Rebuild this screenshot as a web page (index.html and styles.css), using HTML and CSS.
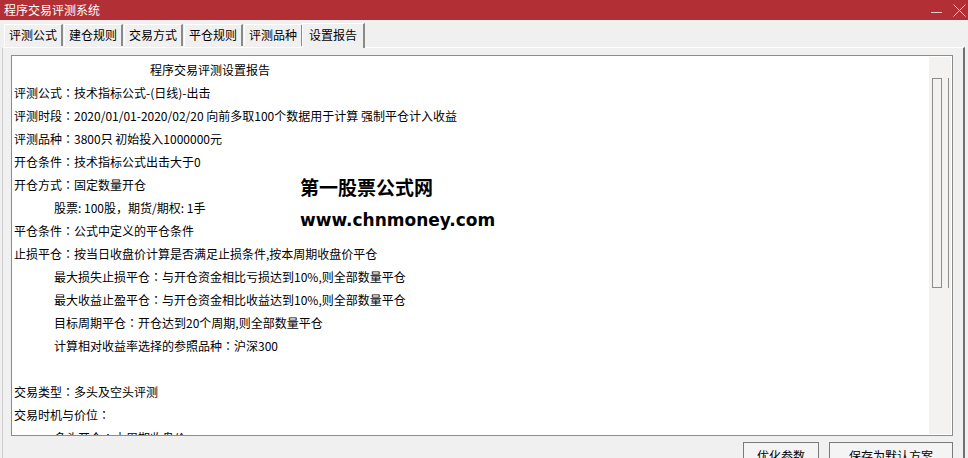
FILE: index.html
```html
<!DOCTYPE html>
<html>
<head>
  <title>程序交易评测系统</title>
  <meta charset="utf-8">
  <link rel="stylesheet" href="styles.css">
</head>
<body>
  <div id="window">
    <div class="titlebar">
      <span class="title">程序交易评测系统</span>
      <div class="win-btns">
        <svg class="btn-min" width="12" height="12" viewBox="0 0 12 12"><line x1="0" y1="6.5" x2="11" y2="6.5" stroke="#e9c9cb" stroke-width="1"/></svg>
        <svg class="btn-close" width="13" height="13" viewBox="0 0 13 13"><path d="M0.5 0.5 L12.5 12.5 M12.5 0.5 L0.5 12.5" stroke="#e9c9cb" stroke-width="1" fill="none"/></svg>
      </div>
    </div>

    <div class="tabs">
      <div class="tab">评测公式</div>
      <div class="tab">建仓规则</div>
      <div class="tab">交易方式</div>
      <div class="tab">平仓规则</div>
      <div class="tab">评测品种</div>
      <div class="tab on">设置报告</div>
    </div>

    <div class="panel">
      <div class="report">
        <div class="report-text">
          <p class="head">程序交易评测设置报告</p>
          <p>评测公式<span class="c">：</span>技术指标公式-(日线)-出击</p>
          <p>评测时段<span class="c">：</span>2020/01/01-2020/02/20 向前多取100个数据用于计算 强制平仓计入收益</p>
          <p>评测品种<span class="c">：</span>3800只 初始投入1000000元</p>
          <p>开仓条件<span class="c">：</span>技术指标公式出击大于0</p>
          <p>开仓方式<span class="c">：</span>固定数量开仓</p>
          <p class="sub">股票: 100股，期货/期权: 1手</p>
          <p>平仓条件<span class="c">：</span>公式中定义的平仓条件</p>
          <p>止损平仓<span class="c">：</span>按当日收盘价计算是否满足止损条件,按本周期收盘价平仓</p>
          <p class="sub">最大损失止损平仓<span class="c">：</span>与开仓资金相比亏损达到10%,则全部数量平仓</p>
          <p class="sub">最大收益止盈平仓<span class="c">：</span>与开仓资金相比收益达到10%,则全部数量平仓</p>
          <p class="sub">目标周期平仓<span class="c">：</span>开仓达到20个周期,则全部数量平仓</p>
          <p class="sub">计算相对收益率选择的参照品种<span class="c">：</span>沪深300</p>
          <p>&nbsp;</p>
          <p>交易类型<span class="c">：</span>多头及空头评测</p>
          <p>交易时机与价位<span class="c">：</span></p>
          <p class="sub">多头开仓<span class="c">：</span>本周期收盘价</p>

          <div class="mark">
            <div class="mark-cn">第一股票公式网</div>
            <div class="mark-en">www.chnmoney.com</div>
          </div>
        </div>
        <div class="scrollbar">
          <div class="thumb"></div>
          <div class="thumb-edge"></div>
        </div>
      </div>

      <div class="actions">
        <button class="btn btn-opt">优化参数</button>
        <button class="btn btn-save">保存为默认方案</button>
      </div>
    </div>
  </div>
</body>
</html>
```

FILE: styles.css
```css
*{
  padding:0;
  margin:0;
  box-sizing:border-box;
}
body{
  width:968px;
  height:458px;
  overflow:hidden;
  background-color:#f0f0f0;
  font-family:"Noto Sans CJK SC", sans-serif;
  font-size:12px;
  color:#000;
}
.titlebar{
  height:20px;
  background-color:#b22f35;
  color:#fff;
  display:flex;
  align-items:center;
  padding-left:4px;
  line-height:20px;
}
.win-btns{
  margin-left:auto;
  display:flex;
  align-items:center;
  gap:10px;
  padding-right:2px;
}
.btn-min{
  margin-top:3px;
}
.tabs{
  display:flex;
  align-items:flex-end;
  height:27px;
  padding-left:4px;
  padding-top:2px;
}
.tab{
  width:59px;
  height:22px;
  margin-right:1px;
  margin-bottom:1px;
  border-top:1px solid #fff;
  border-left:1px solid #fff;
  border-right:2px solid #8a8a8a;
  text-align:center;
  line-height:20px;
  background-color:#f0f0f0;
}
.tab.on{
  height:25px;
  width:63px;
  margin-left:-2px;
  margin-right:0;
  margin-bottom:-1px;
  line-height:21px;
  position:relative;
  z-index:2;
}
.panel{
  border-top:1px solid #fff;
  border-left:1px solid #cfcfcf;
  border-right:2px solid #6f6f6f;
  margin-left:2px;
  margin-right:3px;
  height:411px;
  padding:7px 0 0 8px;
}
.report{
  width:942px;
  height:381px;
  border:1px solid #8c8c8c;
  background-color:#fff;
  display:flex;
}
.report-text{
  flex:1;
  position:relative;
  overflow:hidden;
  padding:2px 0 0 2px;
}
.report-text p{
  line-height:23px;
  height:23px;
  white-space:nowrap;
}
/* 全角冒号居中 */
.report-text .c{
  font-family:"Noto Sans CJK JP", sans-serif;
}
.report-text .head{
  padding-left:136px;
}
.report-text .sub{
  padding-left:40px;
}
.mark{
  position:absolute;
  left:288px;
  top:119px;
  font-weight:bold;
}
.mark-cn{
  font-size:19px;
  line-height:24px;
}
.mark-en{
  font-family:"DejaVu Sans", sans-serif;
  font-size:17px;
  line-height:24px;
  margin-top:9px;
}
.scrollbar{
  width:22px;
  margin:1px 1px 1px 0;
  background-color:#f3f2f1;
  display:flex;
  align-items:flex-start;
  padding:21px 0 0 3px;
}
.thumb{
  width:10px;
  height:210px;
  border:1px solid #8c8c8c;
}
.thumb-edge{
  width:1px;
  height:210px;
  margin-left:6px;
  background-color:#8c8c8c;
}
.actions{
  display:flex;
  justify-content:flex-end;
  gap:10px;
  width:942px;
  margin-top:6px;
}
.btn{
  height:24px;
  border:1px solid #7a7a7a;
  background-color:#f4f4f4;
  font-family:"Noto Sans CJK SC", sans-serif;
  font-size:12px;
  color:#000;
  padding-top:3px;
}
.btn-opt{
  width:76px;
}
.btn-save{
  width:124px;
}
```
